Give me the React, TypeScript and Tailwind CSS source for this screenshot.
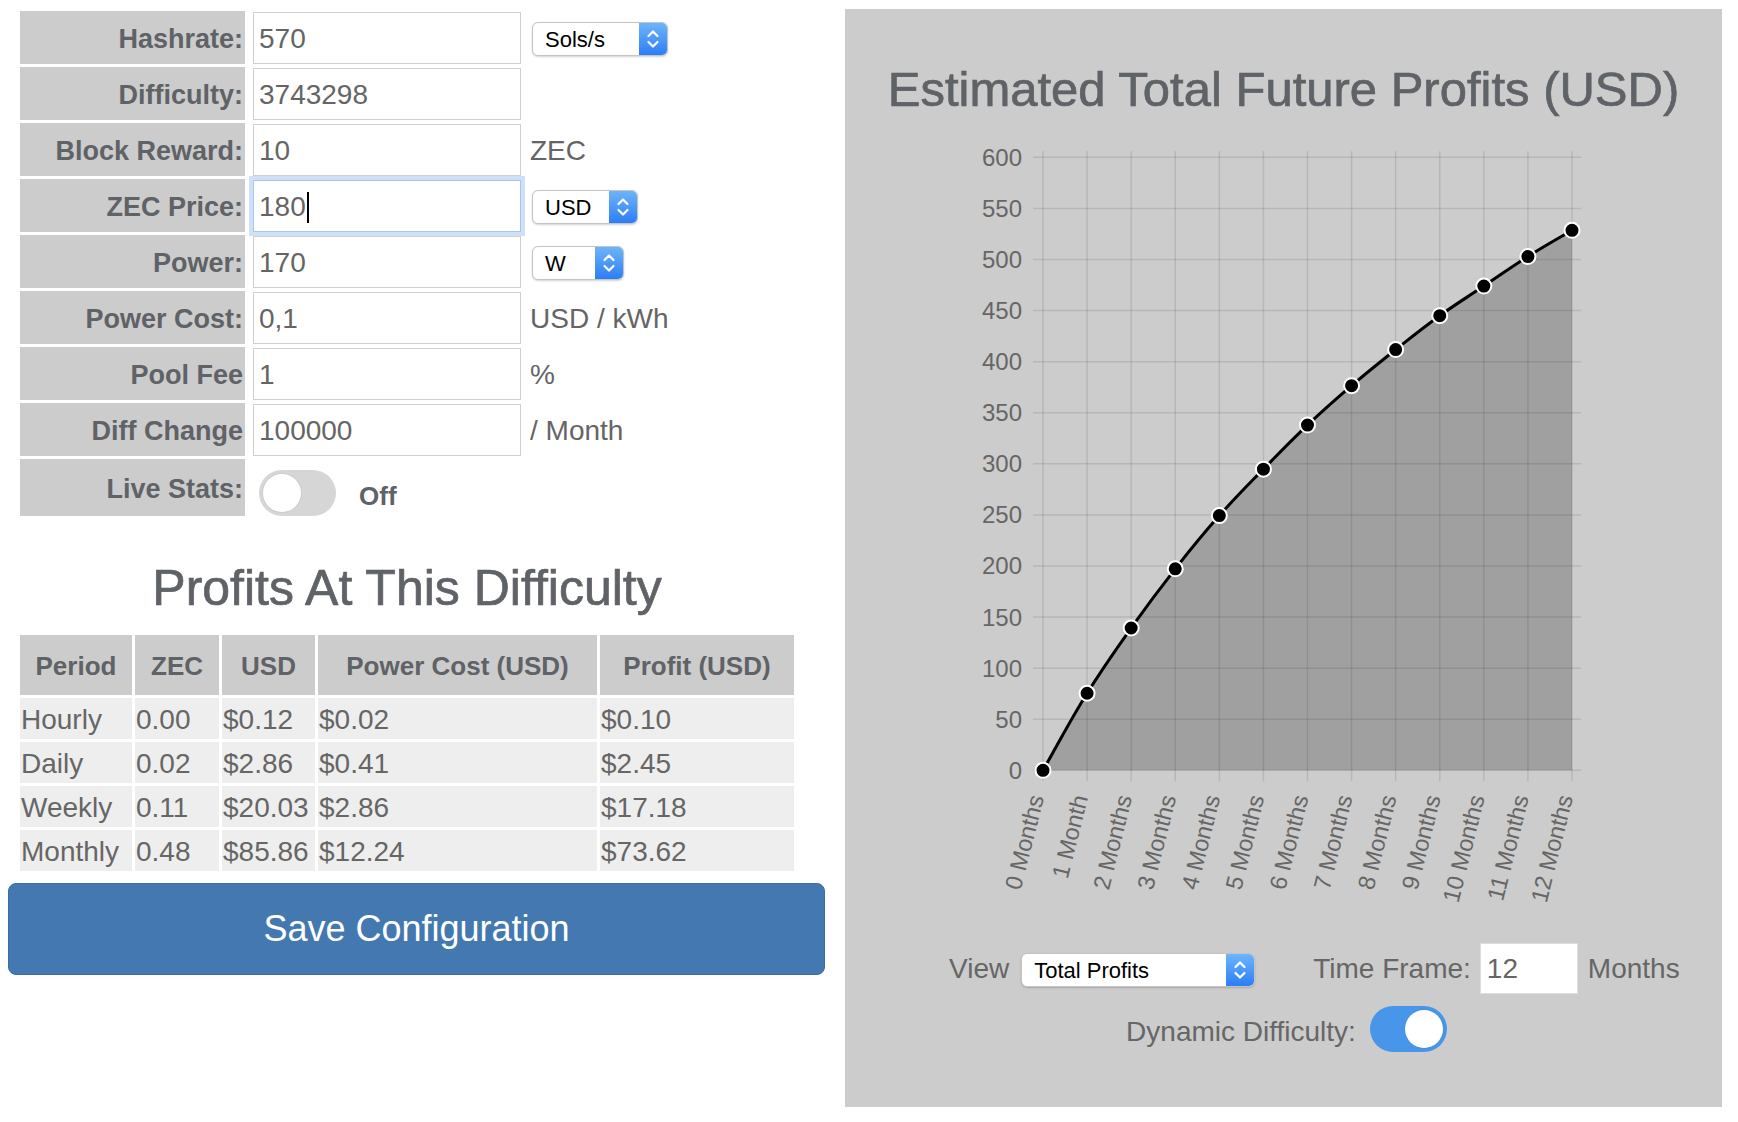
import React from 'react';

type FormRow = {
  label: string;
  value: string;
  unit?: string;
  select?: { text: string; width: string };
  focused?: boolean;
};

const formRows: FormRow[] = [
  { label: 'Hashrate:', value: '570', select: { text: 'Sols/s', width: 'w-[136px]' } },
  { label: 'Difficulty:', value: '3743298' },
  { label: 'Block Reward:', value: '10', unit: 'ZEC' },
  { label: 'ZEC Price:', value: '180', select: { text: 'USD', width: 'w-[106px]' }, focused: true },
  { label: 'Power:', value: '170', select: { text: 'W', width: 'w-[92px]' } },
  { label: 'Power Cost:', value: '0,1', unit: 'USD / kWh' },
  { label: 'Pool Fee', value: '1', unit: '%' },
  { label: 'Diff Change', value: '100000', unit: '/ Month' },
];

const profits = [
  ['Hourly', '0.00', '$0.12', '$0.02', '$0.10'],
  ['Daily', '0.02', '$2.86', '$0.41', '$2.45'],
  ['Weekly', '0.11', '$20.03', '$2.86', '$17.18'],
  ['Monthly', '0.48', '$85.86', '$12.24', '$73.62'],
];

const headers = ['Period', 'ZEC', 'USD', 'Power Cost (USD)', 'Profit (USD)'];

// cumulative profit per month
const series = [0, 75.4, 139.3, 197.2, 249.3, 294.8, 337.9, 376.5, 411.8, 445, 474, 502.9, 528.6];

function PopupSelect({ text, width }: { text: string; width: string }) {
  return (
    <div
      className={`${width} flex h-[34px] items-stretch overflow-hidden rounded-[6px] border border-[#c4c4c4] bg-white shadow-[0_1px_2px_rgba(0,0,0,0.18)]`}
    >
      <span className="flex flex-1 items-center pl-[12px] text-[22px] text-black">{text}</span>
      <span className="flex w-[28px] items-center justify-center bg-linear-to-b from-[#6db4fb] to-[#2c7df6]">
        <svg width="14" height="22" viewBox="0 0 14 22" fill="none" stroke="white" strokeWidth="2.2" strokeLinecap="round" strokeLinejoin="round">
          <path d="M2.5 8 L7 3.5 L11.5 8" />
          <path d="M2.5 14 L7 18.5 L11.5 14" />
        </svg>
      </span>
    </div>
  );
}

function Toggle({ on }: { on: boolean }) {
  return (
    <div
      className={`flex h-[46px] w-[77px] items-center rounded-full px-[4px] ${
        on ? 'justify-end bg-[#4896ea]' : 'justify-start bg-[#d6d6d6]'
      }`}
    >
      <div className="h-[38px] w-[38px] rounded-full bg-white shadow-[0_0_0_1px_rgba(0,0,0,0.04)]" />
    </div>
  );
}

function ProfitChart() {
  const x0 = 198;
  const step = 529 / 12;
  const y0 = 630.3;
  const k = 51.08 / 50;
  const px = (i: number) => x0 + i * step;
  const py = (v: number) => y0 - v * k;
  const pts = series.map((v, i) => ({ x: px(i), y: py(v) }));

  // spline control points, same scheme as Chart.js (tension 0.4)
  const t = 0.4;
  const cps = pts.map((cur, i) => {
    const prev = pts[Math.max(0, i - 1)];
    const next = pts[Math.min(pts.length - 1, i + 1)];
    const d01 = Math.hypot(cur.x - prev.x, cur.y - prev.y);
    const d12 = Math.hypot(next.x - cur.x, next.y - cur.y);
    const s01 = d01 / (d01 + d12 || 1);
    const s12 = d12 / (d01 + d12 || 1);
    return {
      inX: cur.x - t * s01 * (next.x - prev.x),
      inY: cur.y - t * s01 * (next.y - prev.y),
      outX: cur.x + t * s12 * (next.x - prev.x),
      outY: cur.y + t * s12 * (next.y - prev.y),
    };
  });
  let line = `M${pts[0].x} ${pts[0].y}`;
  for (let i = 1; i < pts.length; i++) {
    line += ` C${cps[i - 1].outX} ${cps[i - 1].outY} ${cps[i].inX} ${cps[i].inY} ${pts[i].x} ${pts[i].y}`;
  }
  const area = `${line} L${px(12)} ${y0} L${x0} ${y0} Z`;

  const ticks = [0, 50, 100, 150, 200, 250, 300, 350, 400, 450, 500, 550, 600];

  return (
    <svg width="877" height="775" viewBox="0 0 877 775" className="block">
      {ticks.map((v) => (
        <line key={`h${v}`} x1="188" x2="736" y1={py(v)} y2={py(v)} stroke="rgba(0,0,0,0.1)" strokeWidth="1.5" />
      ))}
      {series.map((_, i) => (
        <line key={`v${i}`} x1={px(i)} x2={px(i)} y1={py(600) - 6} y2={y0 + 11} stroke="rgba(0,0,0,0.1)" strokeWidth="1.5" />
      ))}
      <path d={area} fill="rgba(0,0,0,0.21)" />
      <path d={line} fill="none" stroke="#000" strokeWidth="3" />
      {pts.map((p, i) => (
        <circle key={`p${i}`} cx={p.x} cy={p.y} r="7.5" fill="#000" stroke="#fff" strokeWidth="2" />
      ))}
      {ticks.map((v) => (
        <text key={`y${v}`} x="177" y={py(v)} textAnchor="end" dominantBaseline="central" fontSize="24" fill="#666">
          {v}
        </text>
      ))}
      {series.map((_, i) => (
        <text
          key={`x${i}`}
          transform={`translate(${px(i) + 1} ${y0 + 27}) rotate(-76)`}
          textAnchor="end"
          fontSize="23.5"
          fill="#666"
        >
          {i === 1 ? '1 Month' : `${i} Months`}
        </text>
      ))}
    </svg>
  );
}

export default function App() {
  return (
    <div className="flex min-h-screen items-start bg-white font-['Liberation_Sans',Arial,sans-serif]">
      {/* calculator column */}
      <div className="ml-[8px] mt-[11px] w-[817px]">
        <div className="flex flex-col gap-[3px] px-[12px]">
          {formRows.map((row) => (
            <div key={row.label} className="flex h-[53px] items-center">
              <div className="flex h-full w-[225px] items-center justify-end bg-[#cccccc] pr-[2px] pt-[3px] text-[27px] font-bold text-[#5f6266]">
                {row.label}
              </div>
              <div className="relative ml-[8px]">
                <input
                  readOnly
                  value={row.value}
                  className={`h-[52px] w-[268px] border bg-white pl-[5px] pt-[3px] text-[28px] text-[#656565] outline-none ${
                    row.focused
                      ? 'border-[#a7c6ee] shadow-[0_0_0_4px_#cfe1f8]'
                      : 'border-[#cfcfcf]'
                  }`}
                />
                {row.focused && (
                  <span className="pointer-events-none absolute left-[54px] top-[12px] h-[31px] w-[1.5px] bg-black" />
                )}
              </div>
              {row.select && (
                <div className="ml-[11px] mt-[3px]">
                  <PopupSelect text={row.select.text} width={row.select.width} />
                </div>
              )}
              {row.unit && <span className="ml-[9px] pt-[3px] text-[28px] text-[#656565]">{row.unit}</span>}
            </div>
          ))}
          <div className="flex h-[57px]">
            <div className="flex h-full w-[225px] items-center justify-end bg-[#cccccc] pr-[2px] pt-[3px] text-[27px] font-bold text-[#5f6266]">
              Live Stats:
            </div>
            <div className="ml-[14px] flex items-center self-end">
              <Toggle on={false} />
              <span className="ml-[23px] mt-[6px] text-[26px] font-bold text-[#5f6266]">Off</span>
            </div>
          </div>
        </div>

        <h2 className="ml-[12px] mt-[42px] w-[774px] text-center text-[50px] leading-[60px] text-[#5f6266] [-webkit-text-stroke:0.7px_#5f6266]">
          Profits At This Difficulty
        </h2>

        <div className="ml-[12px] mt-[17px] grid w-[774px] grid-cols-[112px_84px_93px_279px_194px] gap-[3px]">
          {headers.map((h) => (
            <div key={h} className="flex h-[60px] items-center justify-center bg-[#cccccc] pt-[2px] text-[26px] font-bold text-[#5f6266]">
              {h}
            </div>
          ))}
          {profits.map((r) =>
            r.map((cell, j) => (
              <div key={`${r[0]}-${j}`} className="flex h-[41px] items-center bg-[#eeeeee] pl-[1px] pt-[2px] text-[28px] text-[#666666]">
                {cell}
              </div>
            ))
          )}
        </div>

        <button className="mt-[12px] h-[92px] w-full rounded-[8px] border border-[#3a6ea6] bg-[#4379b0] text-[36px] text-white">
          Save Configuration
        </button>
      </div>

      {/* projection panel */}
      <div className="ml-[20px] mt-[9px] flex h-[1098px] w-[877px] flex-col bg-[#cccccc]">
        <h2 className="mt-[52px] text-center text-[49px] leading-[56px] text-[#5f6266] [-webkit-text-stroke:0.7px_#5f6266]">
          Estimated Total Future Profits (USD)
        </h2>
        <div className="mt-[23px]">
          <ProfitChart />
        </div>
        <div className="mt-[28px] flex h-[51px] items-center pl-[104px] text-[28px] text-[#666666]">
          <span>View</span>
          <div className="ml-[12px] mt-[3px]">
            <PopupSelect text="Total Profits" width="w-[234px]" />
          </div>
          <span className="ml-[58px]">Time Frame:</span>
          <input
            readOnly
            value="12"
            className="ml-[9px] h-[51px] w-[98px] border border-[#dddddd] bg-white pl-[6px] text-[28px] text-[#666666] outline-none"
          />
          <span className="ml-[10px]">Months</span>
        </div>
        <div className="mt-[11px] flex items-center justify-center pl-[6px] text-[28px] text-[#666666]">
          <span className="mt-[6px]">Dynamic Difficulty:</span>
          <div className="ml-[14px]">
            <Toggle on />
          </div>
        </div>
      </div>
    </div>
  );
}
